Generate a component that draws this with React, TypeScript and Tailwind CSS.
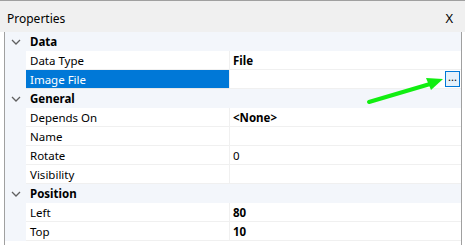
import { ReactNode } from "react"

type Item =
  | { kind: "cat"; label: string }
  | { kind: "prop"; label: string; value?: string; bold?: boolean; selected?: boolean; button?: boolean }

const items: Item[] = [
  { kind: "cat", label: "Data" },
  { kind: "prop", label: "Data Type", value: "File", bold: true },
  { kind: "prop", label: "Image File", selected: true, button: true },
  { kind: "cat", label: "General" },
  { kind: "prop", label: "Depends On", value: "<None>", bold: true },
  { kind: "prop", label: "Name" },
  { kind: "prop", label: "Rotate", value: "0" },
  { kind: "prop", label: "Visibility" },
  { kind: "cat", label: "Position" },
  { kind: "prop", label: "Left", value: "80", bold: true },
  { kind: "prop", label: "Top", value: "10", bold: true },
]

function Chevron() {
  return (
    <svg width="10" height="6" viewBox="0 0 10 6" fill="none" aria-hidden="true">
      <path d="M1 1L5 5L9 1" stroke="#606060" strokeWidth="1.3" />
    </svg>
  )
}

function CategoryRow({ label }: { label: string }) {
  return (
    <div className="flex h-[19px] items-center bg-[#f3f6fb]">
      <div className="flex w-[21px] shrink-0 items-center justify-center pl-[1px]">
        <Chevron />
      </div>
      <span className="pl-[4px] pt-[1px] font-bold">{label}</span>
    </div>
  )
}

function PropRow({ item }: { item: Extract<Item, { kind: "prop" }> }) {
  let value: ReactNode = null
  if (item.value) {
    value = <span className={item.bold ? "pt-[1px] font-bold" : "pt-[1px]"}>{item.value}</span>
  }
  return (
    <div className="flex h-[19px] bg-[#f3f6fb]">
      <div className="w-[21px] shrink-0" />
      <div
        className={
          item.selected
            ? "flex w-[203px] shrink-0 items-center border-b border-[#e8e8e8] bg-[#0078d7] pl-[4px] pt-[1px] text-white"
            : "flex w-[203px] shrink-0 items-center border-b border-[#f0f0f0] bg-white pl-[4px] pt-[1px]"
        }
      >
        {item.label}
      </div>
      <div className="flex flex-1 items-center justify-between border-b border-l border-[#f0f0f0] bg-white pl-[3px] pr-[1px]">
        {value}
        {item.button && (
          <div className="ml-auto flex h-[16px] w-[15px] items-center justify-center border border-[#0078d7] bg-[#e5f1fb] pb-[5px] text-[11px] leading-none">
            ...
          </div>
        )}
      </div>
    </div>
  )
}

export default function App() {
  return (
    <div
      className="relative h-[245px] w-[465px] overflow-hidden border-t border-[#a0a0a0] bg-white text-[11.5px] leading-none text-black"
      style={{ fontFamily: '"Noto Sans", "Open Sans", sans-serif' }}
    >
      <div className="flex h-[31px] items-center justify-between bg-[#f0f0f0] pl-[7px] pr-[12px] pt-[4px]">
        <span className="text-[12px]">Properties</span>
        <span className="text-[13px]">X</span>
      </div>
      <div className="ml-[4px] mr-[3px] h-[213px] border-l border-r border-[#a0a0a0] bg-white">
        {items.map((it, i) =>
          it.kind === "cat" ? <CategoryRow key={i} label={it.label} /> : <PropRow key={i} item={it} />,
        )}
      </div>
      <svg
        className="pointer-events-none absolute left-0 top-0"
        width="465"
        height="245"
        viewBox="0 0 465 245"
        aria-hidden="true"
      >
        <line x1="369" y1="101" x2="430" y2="83" stroke="#11ee11" strokeWidth="4" strokeLinecap="round" />
        <polygon points="443,78 426,77 431,89" fill="#11ee11" />
      </svg>
    </div>
  )
}
